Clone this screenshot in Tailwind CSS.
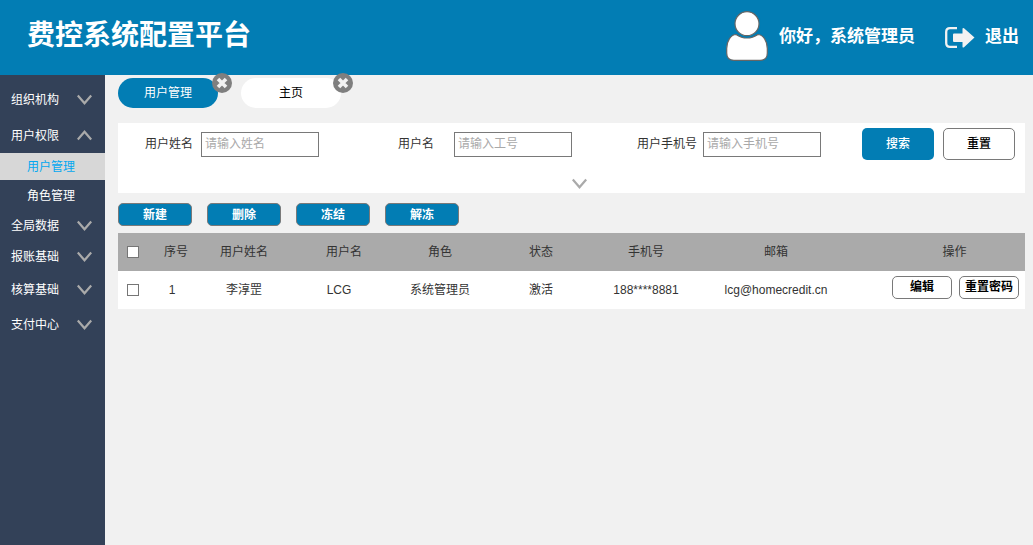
<!DOCTYPE html>
<html lang="zh-CN">
<head>
<meta charset="utf-8">
<meta name="viewport" content="width=device-width, initial-scale=1">
<title>费控系统配置平台</title>
<script src="https://cdn.jsdelivr.net/npm/@tailwindcss/browser@4"></script>
</head>
<body class="flex min-h-screen flex-col bg-[#f1f1f1] font-['Liberation_Sans','Noto_Sans_CJK_SC',sans-serif] text-xs text-[#333333]">
<svg class="hidden" aria-hidden="true">
  <symbol id="down" viewBox="0 0 16 12"><path d="M.8 1.500 7.500 9.200 14.200 1.500" fill="none" stroke="#aaaaaa" stroke-width="2.200"/></symbol>
  <symbol id="up" viewBox="0 0 16 12"><path d="M.8 9.500 7.500 1.800 14.200 9.500" fill="none" stroke="#aaaaaa" stroke-width="2.200"/></symbol>
  <symbol id="close" viewBox="0 0 20 20"><circle cx="10" cy="10" r="10" fill="#7f7f7f"/><path d="M6 6 14 14M14 6 6 14" stroke="#f2f2f2" stroke-width="3.600"/></symbol>
</svg>

<header class="flex h-[75px] items-center justify-between bg-[#027db4] pr-3.5 pl-[27px] text-white">
  <h1 class="pb-1 text-[28px] font-bold">费控系统配置平台</h1>
  <div class="flex items-center text-[17px] font-bold">
    <svg class="mr-[11px] mb-1 h-[50px] w-[42px]" viewBox="0 0 42 50" fill="#fff" stroke="#666" stroke-width="1.2" aria-hidden="true">
      <path d="M10 23.500C13 25.500 17 27 21 27S29 25.500 32 23.500C37 23.500 41.300 30 41.300 37.500V42Q41.300 49.300 34 49.300H8Q.700 49.300.700 42V37.500C.700 30 5 23.500 10 23.500Z"/>
      <circle cx="21" cy="12.700" r="13" stroke="#027db4" stroke-width="2" fill="none"/>
      <circle cx="21" cy="12.700" r="12"/>
    </svg>
    <span>你好，系统管理员</span>
    <a href="#" class="ml-[30px] flex items-center gap-2.5">
      <svg class="h-[22px] w-[30px]" viewBox="0 0 30 22" fill="#f2f2f2" aria-hidden="true">
        <path d="M12 1.200H5Q1.200 1.200 1.200 5V16Q1.200 19.800 5 19.800H12" fill="none" stroke="#f2f2f2" stroke-width="2.300"/>
        <path d="M9 6.500H17.500V1.500Q18 .500 19 1.200L29.500 10.500L19 20.300Q18 21 17.500 20V15H9Q8 15 8 14V7.500Q8 6.500 9 6.500Z"/>
      </svg>
      退出
    </a>
  </div>
</header>

<div class="flex flex-1">
  <nav class="w-[105px] shrink-0 bg-[#334158] pt-[7px] text-white">
    <button class="flex h-9 w-full items-center justify-between pr-3 pl-[11px]">组织机构<svg class="h-3 w-4"><use href="#down"/></svg></button>
    <button class="flex h-[35px] w-full items-center justify-between pr-3 pl-[11px]">用户权限<svg class="h-3 w-4"><use href="#up"/></svg></button>
    <a href="#" class="flex h-[27px] items-center bg-[#d7d7d7] pl-[27px] text-[#02a7f0]">用户管理</a>
    <a href="#" class="flex h-8 items-center pl-[27px]">角色管理</a>
    <button class="flex h-7 w-full items-center justify-between pr-3 pl-[11px]">全局数据<svg class="h-3 w-4"><use href="#down"/></svg></button>
    <button class="flex h-[34px] w-full items-center justify-between pr-3 pl-[11px]">报账基础<svg class="h-3 w-4"><use href="#down"/></svg></button>
    <button class="flex h-8 w-full items-center justify-between pr-3 pl-[11px]">核算基础<svg class="h-3 w-4"><use href="#down"/></svg></button>
    <button class="flex h-[38px] w-full items-center justify-between pr-3 pl-[11px]">支付中心<svg class="h-3 w-4"><use href="#down"/></svg></button>
  </nav>

  <main class="min-w-0 flex-1 pt-[3px] pr-2 pl-[13px]">
    <div class="flex gap-[23px]">
      <div class="relative">
        <button class="h-[30px] w-[100px] rounded-full bg-[#027db4] text-white">用户管理</button>
        <button class="absolute -top-[5px] -right-3.5 size-5" aria-label="关闭用户管理"><svg class="size-5"><use href="#close"/></svg></button>
      </div>
      <div class="relative">
        <button class="h-[30px] w-[100px] rounded-full bg-white text-black">主页</button>
        <button class="absolute -top-[5px] -right-3 size-5" aria-label="关闭主页"><svg class="size-5"><use href="#close"/></svg></button>
      </div>
    </div>

    <form class="mt-[15px] bg-white pt-[5px] pr-2.5 pb-[3px]">
      <div class="flex items-center pl-[27px]">
        <div class="flex items-center gap-2">
          <label for="name" class="shrink-0">用户姓名</label>
          <input id="name" type="text" placeholder="请输入姓名" class="h-[25px] w-[118px] border border-[#797979] px-[3px] placeholder:text-[#a9a9a9]">
        </div>
        <div class="ml-[79px] flex items-center gap-5">
          <label for="account" class="shrink-0">用户名</label>
          <input id="account" type="text" placeholder="请输入工号" class="h-[25px] w-[118px] border border-[#797979] px-[3px] placeholder:text-[#a9a9a9]">
        </div>
        <div class="ml-[65px] flex items-center gap-1.5">
          <label for="phone" class="shrink-0">用户手机号</label>
          <input id="phone" type="text" placeholder="请输入手机号" class="h-[25px] w-[118px] border border-[#797979] px-[3px] placeholder:text-[#a9a9a9]">
        </div>
        <div class="ml-auto flex gap-[9px]">
          <button type="button" class="h-8 w-[72px] rounded-[5px] bg-[#027db4] font-medium text-white">搜索</button>
          <button type="button" class="h-8 w-[72px] rounded-[5px] border border-[#797979] bg-white font-medium text-black">重置</button>
        </div>
      </div>
      <button type="button" class="mx-auto mt-[18px] block h-3 w-4 translate-x-[13px]" aria-label="展开更多条件"><svg class="h-3 w-4"><use href="#down"/></svg></button>
    </form>

    <div class="mt-2.5 flex gap-[15px] font-bold text-white">
      <button class="h-[23px] w-[74px] rounded-[5px] border border-[#797979] bg-[#027db4]">新建</button>
      <button class="h-[23px] w-[74px] rounded-[5px] border border-[#797979] bg-[#027db4]">删除</button>
      <button class="h-[23px] w-[74px] rounded-[5px] border border-[#797979] bg-[#027db4]">冻结</button>
      <button class="h-[23px] w-[74px] rounded-[5px] border border-[#797979] bg-[#027db4]">解冻</button>
    </div>

    <table class="mt-[7px] w-full table-fixed text-center">
      <colgroup>
        <col class="w-[30px]"><col class="w-14"><col class="w-20"><col class="w-[120px]"><col class="w-[72px]"><col class="w-[130px]"><col class="w-20"><col class="w-[180px]"><col>
      </colgroup>
      <thead class="bg-[#aaaaaa]">
        <tr class="h-[38px]">
          <th><input type="checkbox" aria-label="全选" class="block mx-auto size-3 appearance-none border border-[#767676] bg-white checked:bg-[#027db4]"></th>
          <th class="font-normal">序号</th><th class="font-normal">用户姓名</th><th class="font-normal">用户名</th><th class="font-normal">角色</th><th class="font-normal">状态</th><th class="font-normal">手机号</th><th class="font-normal">邮箱</th><th class="pl-[18px] font-normal">操作</th>
        </tr>
      </thead>
      <tbody class="bg-white">
        <tr class="h-[38px]">
          <td><input type="checkbox" aria-label="选择李淳罡" class="block mx-auto size-3 appearance-none border border-[#767676] bg-white checked:bg-[#027db4]"></td>
          <td class="pr-2">1</td><td>李淳罡</td><td class="pr-2.5">LCG</td><td class="whitespace-nowrap">系统管理员</td><td>激活</td><td>188****8881</td><td>lcg@homecredit.cn</td>
          <td class="pr-1.5 pb-1.5">
            <div class="flex justify-end gap-[7px] font-bold text-black">
              <button class="h-[23px] w-[60px] rounded-[5px] border border-[#797979] bg-white">编辑</button>
              <button class="h-[23px] w-[60px] rounded-[5px] border border-[#797979] bg-white whitespace-nowrap">重置密码</button>
            </div>
          </td>
        </tr>
      </tbody>
    </table>
  </main>
</div>
</body>
</html>
